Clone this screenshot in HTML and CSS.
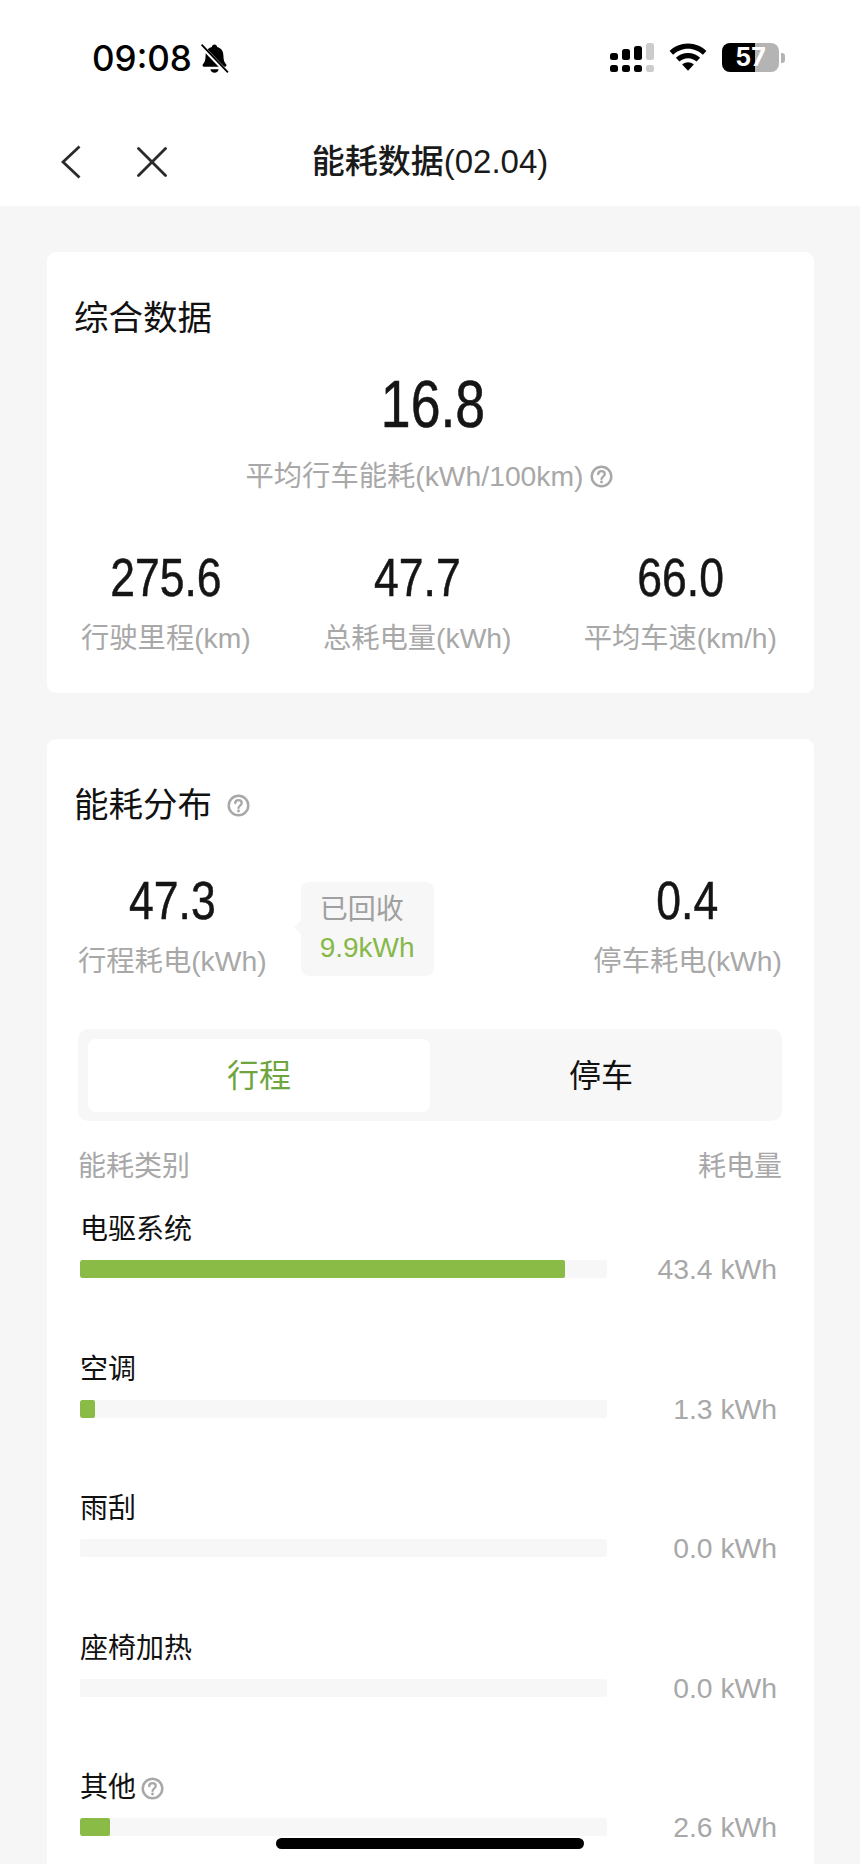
FILE: index.html
```html
<!DOCTYPE html>
<html lang="zh-CN">
<head>
<meta charset="utf-8">
<title>能耗数据</title>
<link rel="stylesheet" href="styles.css">
</head>
<body>
<svg class="defs" width="0" height="0" aria-hidden="true">
  <symbol id="help" viewBox="0 0 24 24">
    <circle cx="12" cy="12" r="10.2" fill="none" stroke="currentColor" stroke-width="2.6"/>
    <path d="M8.6 9.6c0-2 1.500-3.200 3.400-3.200s3.400 1.200 3.400 3c0 2.600-3.400 2.700-3.400 5.200" fill="none" stroke="currentColor" stroke-width="2.400" stroke-linecap="round"/>
    <circle cx="12" cy="17.800" r="1.500" fill="currentColor"/>
  </symbol>
</svg>
<div class="page">
  <header class="top">
    <div class="status">
      <div class="status-left">
        <span class="time">09:08</span>
        <svg class="bell" viewBox="0 0 28 30">
          <path d="M14 1.500c1.500 0 2.400 1 2.600 2.300 4 1 6 4.300 6 8.200 0 4.500 1 6.800 2.600 8.600.8.900.3 2.400-1 2.400H3.800c-1.300 0-1.800-1.500-1-2.400 1.600-1.800 2.600-4.100 2.600-8.600 0-3.900 2-7.200 6-8.200.2-1.300 1.100-2.300 2.600-2.300z" fill="#000"/>
          <path d="M10 25.500h8c-.3 2-1.900 3.300-4 3.300s-3.700-1.300-4-3.300z" fill="#000"/>
          <path d="M1.500 3 25.500 28" stroke="#fff" stroke-width="4"/>
          <path d="M1.500 1.500 27 28.500" stroke="#000" stroke-width="1.800"/>
        </svg>
      </div>
      <div class="status-right">
        <div class="signal">
          <span class="bar-col"><i class="seg s1"></i><i class="seg dot"></i></span>
          <span class="bar-col"><i class="seg s2"></i><i class="seg dot"></i></span>
          <span class="bar-col"><i class="seg s3"></i><i class="seg dot"></i></span>
          <span class="bar-col off"><i class="seg s4"></i><i class="seg dot"></i></span>
        </div>
        <svg class="wifi" viewBox="0 0 38 28">
          <path d="M19 .5C11.800.5 5.400 3.300.6 7.900l3.500 3.900C8 8 13.200 5.700 19 5.700s11 2.300 14.900 6.100l3.500-3.900C32.600 3.300 26.200.5 19 .5z" fill="#000"/>
          <path d="M19 9.900c-4.700 0-8.900 1.800-12.100 4.800l3.500 3.900c2.200-2.100 5.300-3.400 8.600-3.400s6.400 1.300 8.600 3.400l3.500-3.900c-3.200-3-7.400-4.800-12.100-4.800z" fill="#000"/>
          <path d="M19 19.300c-2.300 0-4.300.9-5.800 2.300L19 27.800l5.800-6.200c-1.500-1.400-3.500-2.300-5.800-2.300z" fill="#000"/>
        </svg>
        <div class="battery">
          <div class="battery-body"><span class="battery-text">57</span></div>
          <span class="battery-nub"></span>
        </div>
      </div>
    </div>
    <nav class="nav">
      <svg class="nav-back" viewBox="0 0 20 34"><path d="M18.500 1.500 2 17l16.500 15.500" fill="none" stroke="#2a2a2a" stroke-width="2.800"/></svg>
      <svg class="nav-close" viewBox="0 0 30 30"><path d="M1.500 1.500l27 27M28.500 1.500l-27 27" fill="none" stroke="#2a2a2a" stroke-width="2.800" stroke-linecap="round"/></svg>
      <h1 class="nav-title">能耗数据(02.04)</h1>
    </nav>
  </header>

  <main class="content">
    <section class="card card-summary">
      <h2 class="card-title">综合数据</h2>
      <div class="hero-num">16.8</div>
      <div class="hero-label">平均行车能耗(kWh/100km)<svg class="help help-hero"><use href="#help"/></svg></div>
      <div class="stats">
        <div class="stat"><div class="num">275.6</div><div class="label">行驶里程(km)</div></div>
        <div class="stat"><div class="num">47.7</div><div class="label">总耗电量(kWh)</div></div>
        <div class="stat"><div class="num">66.0</div><div class="label">平均车速(km/h)</div></div>
      </div>
    </section>

    <section class="card card-dist">
      <h2 class="card-title">能耗分布<svg class="help help-title"><use href="#help"/></svg></h2>
      <div class="dist-stats">
        <div class="stat"><div class="num">47.3</div><div class="label">行程耗电(kWh)</div></div>
        <div class="recovered">
          <div class="recovered-label">已回收</div>
          <div class="recovered-value">9.9kWh</div>
        </div>
        <div class="stat stat-end"><div class="num">0.4</div><div class="label">停车耗电(kWh)</div></div>
      </div>
      <div class="tabs">
        <div class="tab tab-active">行程</div>
        <div class="tab">停车</div>
      </div>
      <div class="list-head"><span>能耗类别</span><span>耗电量</span></div>
      <div class="rows">
        <div class="row">
          <div class="row-name">电驱系统</div>
          <div class="row-line"><div class="track"><div class="fill" style="width:92%"></div></div><div class="row-value">43.4 kWh</div></div>
        </div>
        <div class="row">
          <div class="row-name">空调</div>
          <div class="row-line"><div class="track"><div class="fill" style="width:2.900%"></div></div><div class="row-value">1.3 kWh</div></div>
        </div>
        <div class="row">
          <div class="row-name">雨刮</div>
          <div class="row-line"><div class="track"></div><div class="row-value">0.0 kWh</div></div>
        </div>
        <div class="row">
          <div class="row-name">座椅加热</div>
          <div class="row-line"><div class="track"></div><div class="row-value">0.0 kWh</div></div>
        </div>
        <div class="row">
          <div class="row-name">其他<svg class="help help-row"><use href="#help"/></svg></div>
          <div class="row-line"><div class="track"><div class="fill" style="width:5.700%"></div></div><div class="row-value">2.6 kWh</div></div>
        </div>
      </div>
    </section>
  </main>
  <div class="home-bar"></div>
</div>
</body>
</html>
```

FILE: styles.css
```css
* { box-sizing: border-box; }
html, body {
  margin: 0;
  padding: 0;
  height: 1864px;
  overflow: hidden;
}
body {
  background: #f6f6f6;
  color: #111;
  font-family: "Liberation Sans", "Noto Sans CJK SC", sans-serif;
}
.defs { position: absolute; }
.page { position: relative; height: 1864px; overflow: hidden; }

.top { background: #fff; height: 206px; }
.status {
  height: 108px;
  display: flex;
  justify-content: space-between;
  align-items: flex-start;
  padding: 43px 75px 0 92px;
}
.status-left { display: flex; align-items: flex-start; gap: 8px; }
.time {
  font-family: "Inter", "Liberation Sans", sans-serif;
  font-size: 35px;
  font-weight: 500;
  line-height: 30px;
  color: #000;
}
.bell { width: 29px; height: 31px; display: block; }
.status-right { display: flex; align-items: flex-start; }
.signal { display: flex; gap: 4.500px; width: 44px; height: 29px; align-items: flex-end; margin-right: 15px; }
.bar-col { display: flex; flex-direction: column; gap: 5px; width: 7.500px; color: #000; }
.bar-col.off { color: #ccc; }
.seg { display: block; background: currentColor; border-radius: 2.500px; }
.dot { height: 7px; }
.s1 { height: 7px; }
.s2 { height: 11px; }
.s3 { height: 14px; }
.s4 { height: 17px; }
.wifi { width: 38px; height: 28px; display: block; margin-right: 15px; }
.battery { display: flex; align-items: center; height: 29px; gap: 2px; }
.battery-body {
  width: 57px;
  height: 29px;
  border-radius: 8px;
  background: linear-gradient(90deg, #000 0 33px, #b4b4b4 33px);
  display: flex;
  align-items: center;
  justify-content: center;
}
.battery-text {
  font-family: "Inter", "Liberation Sans", sans-serif;
  font-size: 25px;
  font-weight: 700;
  line-height: 29px;
  color: #fff;
}
.battery-nub { width: 4px; height: 10px; background: #b4b4b4; border-radius: 0 3px 3px 0; }

.nav { position: relative; height: 98px; }
.nav-back { position: absolute; left: 61px; top: 37px; width: 20px; height: 34px; }
.nav-close { position: absolute; left: 137px; top: 39px; width: 30px; height: 30px; }
.nav-title {
  margin: 0;
  font-size: 33px;
  font-weight: 500;
  line-height: 44px;
  padding-top: 32px;
  text-align: center;
  color: #1a1a1a;
}

.content { padding: 46px 46px 0 47px; display: flex; flex-direction: column; gap: 46px; }
.card { background: #fff; border-radius: 9px; }
.card-summary { height: 441px; padding: 45px 37px 0 34px; }
.card-dist { padding: 45px 32px 0 31px; height: 1200px; }
.card-title {
  margin: 0;
  font-size: 34.500px;
  font-weight: 400;
  line-height: 42px;
  color: #111;
  display: flex;
  align-items: center;
}
.card-summary .card-title { margin-left: -7px; }
.card-dist .card-title { margin-left: -4px; }

.hero-num {
  margin-top: 25px;
  font-size: 67px;
  line-height: 80px;
  text-align: center;
  color: #151515;
  transform: translateX(4px) scaleX(0.8);
  -webkit-text-stroke: 0.6px #151515;
}
.hero-label {
  margin-top: 12px;
  font-size: 28.300px;
  line-height: 40px;
  color: #a8a8a8;
  display: flex;
  justify-content: center;
  align-items: center;
}
.help { display: block; color: #a8a8a8; }
.help-hero { width: 23px; height: 23px; margin-left: 6px; }
.help-title { width: 23px; height: 23px; margin-left: 15px; }
.help-row { width: 23px; height: 23px; margin-left: 5px; }

.stats { margin-top: 52px; display: flex; justify-content: space-between; }
.stat { text-align: center; }
.num {
  font-size: 53px;
  line-height: 60px;
  color: #151515;
  transform: scaleX(0.84);
  -webkit-text-stroke: 0.5px #151515;
}
.label {
  margin-top: 10px;
  font-size: 28.300px;
  line-height: 40px;
  color: #a8a8a8;
  white-space: nowrap;
}

.dist-stats { margin-top: 45px; display: flex; align-items: flex-start; }
.recovered {
  position: relative;
  margin: 11px 0 0 34px;
  width: 133px;
  height: 94px;
  padding: 9px 19px 0;
  background: #f7f7f7;
  border-radius: 8px;
}
.recovered::before {
  content: "";
  position: absolute;
  left: -7px;
  top: 38px;
  border-style: solid;
  border-width: 7px 7px 7px 0;
  border-color: transparent #f7f7f7 transparent transparent;
}
.recovered-label { font-size: 28px; line-height: 38px; color: #a0a0a0; }
.recovered-value { font-size: 28px; line-height: 37px; color: #86b84a; }
.stat-end { margin-left: auto; }

.tabs {
  margin-top: 48px;
  height: 92px;
  padding: 10px;
  background: #f7f7f7;
  border-radius: 10px;
  display: flex;
}
.tab {
  flex: 1;
  height: 73px;
  font-size: 32px;
  line-height: 75px;
  text-align: center;
  color: #111;
  border-radius: 8px;
}
.tab-active { background: #fff; color: #6fa53e; }

.list-head {
  margin-top: 26px;
  display: flex;
  justify-content: space-between;
  font-size: 28px;
  line-height: 40px;
  color: #a8a8a8;
}
.rows { margin-top: 22px; padding: 0 5px 0 2px; }
.row { height: 139.500px; }
.row-name {
  font-size: 28px;
  line-height: 40px;
  color: #111;
  display: flex;
  align-items: center;
  position: relative;
  top: 1px;
}
.row-line { margin-top: 11px; display: flex; align-items: center; height: 18px; }
.track { width: 527px; height: 18px; background: #f7f7f7; border-radius: 2px; overflow: hidden; }
.fill { height: 100%; background: #8abb47; border-radius: 2px; }
.row-value {
  margin-left: auto;
  font-size: 28.300px;
  line-height: 18px;
  color: #a8a8a8;
  white-space: nowrap;
}

.home-bar {
  position: absolute;
  left: 276px;
  top: 1838px;
  width: 308px;
  height: 11px;
  background: #000;
  border-radius: 6px;
}
```
